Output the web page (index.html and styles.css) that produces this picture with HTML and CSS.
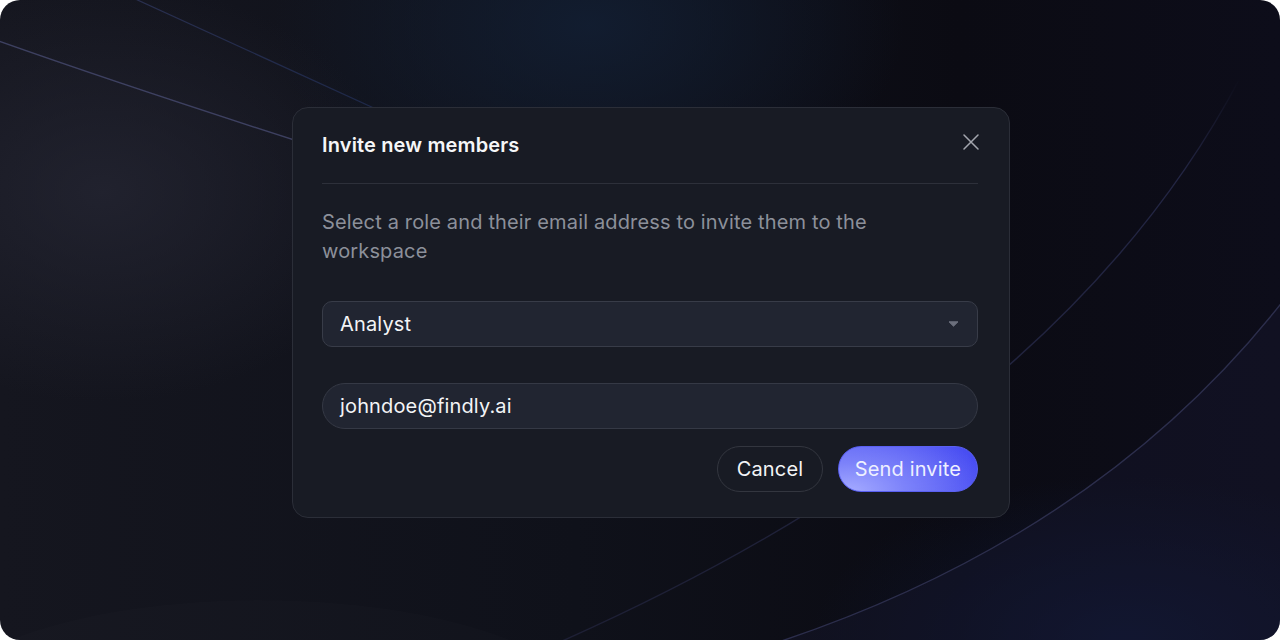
FILE: index.html
```html
<!DOCTYPE html>
<html lang="en">
<head>
<meta charset="utf-8">
<title>Invite new members</title>
<link rel="stylesheet" href="styles.css">
</head>
<body>
<div class="frame">
  <svg class="bg-art" width="1280" height="640" viewBox="0 0 1280 640" aria-hidden="true">
    <defs>
      <linearGradient id="fadeA" x1="1240" y1="78" x2="560" y2="642" gradientUnits="userSpaceOnUse">
        <stop offset="0" stop-color="#252848" stop-opacity="0"/>
        <stop offset="0.12" stop-color="#252848" stop-opacity="0.9"/>
        <stop offset="1" stop-color="#1f2138" stop-opacity="0.9"/>
      </linearGradient>
      <linearGradient id="fadeD" x1="120" y1="-8" x2="400" y2="120" gradientUnits="userSpaceOnUse">
        <stop offset="0" stop-color="#2a3050"/>
        <stop offset="1" stop-color="#1c2748"/>
      </linearGradient>
    </defs>
    <path d="M1290 292 Q1100 540 760 648 L1290 648 Z" fill="#1a1a34" fill-opacity="0.35"/>
    <ellipse cx="260" cy="715" rx="330" ry="115" fill="#ffffff" fill-opacity="0.012"/>
    <path d="M-10 38 Q150 95 420 180" fill="none" stroke="#3d4060" stroke-width="1.4"/>
    <path d="M120 -8 L400 120" fill="none" stroke="url(#fadeD)" stroke-width="1.2"/>
    <path d="M1240 78 Q1060 420 560 642" fill="none" stroke="url(#fadeA)" stroke-width="1.4"/>
    <path d="M1290 292 Q1100 540 760 648" fill="none" stroke="#2c2e4c" stroke-width="1.4"/>
  </svg>

  <div class="dialog" role="dialog" aria-labelledby="dlg-title">
    <div class="dialog-header">
      <h2 class="dialog-title" id="dlg-title">Invite new members</h2>
      <button class="close-btn" aria-label="Close">
        <svg width="16" height="16" viewBox="0 0 16 16"><path d="M1 1 L15 15 M15 1 L1 15" stroke="currentColor" stroke-width="1.5" stroke-linecap="round" fill="none"/></svg>
      </button>
    </div>
    <p class="dialog-desc">Select a role and their email address to invite them to the workspace</p>
    <div class="field select">
      <span>Analyst</span>
      <svg class="caret" width="11" height="6" viewBox="0 0 11 6"><path d="M1 0.8 L10 0.8 L5.5 5.2 Z" fill="currentColor" stroke="currentColor" stroke-width="1" stroke-linejoin="round"/></svg>
    </div>
    <div class="field input">johndoe@findly.ai</div>
    <div class="actions">
      <button class="btn btn-ghost">Cancel</button>
      <button class="btn btn-primary">Send invite</button>
    </div>
  </div>
</div>
</body>
</html>
```

FILE: styles.css
```css
html, body {
  margin: 0;
  padding: 0;
  background: #ffffff;
}

body {
  font-family: "Inter", "Noto Sans", "Liberation Sans", sans-serif;
  -webkit-font-smoothing: antialiased;
}

.frame {
  position: relative;
  width: 1280px;
  height: 640px;
  border-radius: 20px;
  overflow: hidden;
  box-sizing: border-box;
  padding: 107px 0 0 292px;
  display: flex;
  align-items: flex-start;
  background:
    radial-gradient(ellipse 420px 300px at 8% 30%, rgba(36, 37, 50, 0.8), transparent 70%),
    radial-gradient(ellipse 420px 260px at 46% 4%, rgba(18, 30, 50, 0.9), transparent 75%),
    radial-gradient(ellipse 420px 220px at 88% 100%, rgba(14, 22, 50, 0.9), transparent 75%),
    linear-gradient(90deg, #15161f 0%, #0f111a 45%, #0b0b13 75%, #0d0d1a 100%);
}

.bg-art {
  position: absolute;
  left: 0;
  top: 0;
  pointer-events: none;
}

.dialog {
  position: relative;
  width: 718px;
  box-sizing: border-box;
  padding: 0 31px 25px 29px;
  background: #181b24;
  border: 1px solid #2b2e38;
  border-radius: 16px;
  color: #f3f4f6;
  letter-spacing: 0.15px;
}

.dialog-header {
  display: flex;
  justify-content: space-between;
  align-items: flex-start;
  padding-top: 23px;
  padding-bottom: 24px;
  border-bottom: 1px solid #2d303a;
}

.dialog-title {
  margin: 0;
  font-size: 20px;
  line-height: 28px;
  font-weight: 600;
  color: #f5f6f8;
}

.close-btn {
  margin: 3px -1px 0 0;
  padding: 0;
  width: 16px;
  height: 16px;
  border: 0;
  background: transparent;
  color: #a3a6ae;
  display: flex;
}

.dialog-desc {
  margin: 24px 0 0;
  max-width: 600px;
  font-size: 20px;
  line-height: 29px;
  color: #8c909a;
}

.field {
  box-sizing: border-box;
  height: 46px;
  display: flex;
  align-items: center;
  font-size: 20px;
  color: #f3f4f6;
  background: #212531;
  border: 1px solid #383c48;
}

.select {
  margin-top: 35px;
  border-radius: 10px;
  padding: 0 18px 0 17px;
  justify-content: space-between;
}

.caret {
  color: #6c707d;
  display: block;
}

.input {
  margin-top: 36px;
  border-radius: 23px;
  padding: 0 17px;
  border-color: #353945;
}

.actions {
  margin-top: 17px;
  display: flex;
  justify-content: flex-end;
  gap: 15px;
}

.btn {
  box-sizing: border-box;
  height: 46px;
  border-radius: 23px;
  font-family: inherit;
  font-size: 20px;
  letter-spacing: 0.15px;
  line-height: 1;
  cursor: pointer;
}

.btn-ghost {
  padding: 0 18.5px;
  background: transparent;
  border: 1px solid #33363f;
  color: #f3f4f6;
}

.btn-primary {
  padding: 0 16px;
  border: 1px solid #5a60f2;
  color: #eef0ff;
  background:
    radial-gradient(ellipse 140px 70px at 8% 100%, #a4aaff 0%, #7c82fa 40%, rgba(90, 96, 246, 0) 100%),
    linear-gradient(90deg, #565cf4 0%, #474cf2 100%);
}
```
